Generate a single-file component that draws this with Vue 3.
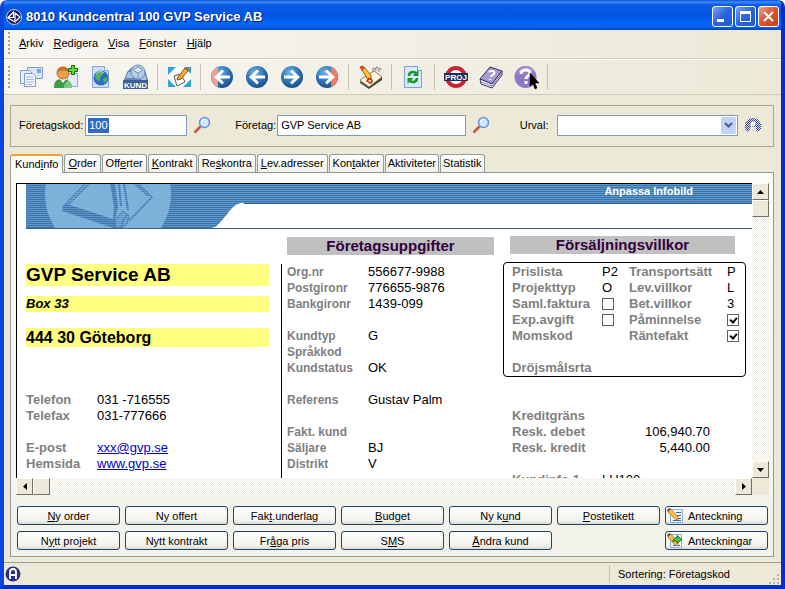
<template>
  <div class="window">
    <header class="titlebar">
      <svg class="titlebar__logo" width="16" height="16" viewBox="0 0 16 16" aria-hidden="true">
        <circle cx="8" cy="8" r="7.5" fill="#1b1f6b" stroke="#dfe6ff" stroke-width="0.8" />
        <path d="M2 8.500 7.500 3v5.500zM9 4l5 4-4 4M2 9l7 4V3.500" fill="none" stroke="#fff" stroke-width="1.2" />
      </svg>
      <h1 class="titlebar__title">8010 Kundcentral 100 GVP Service AB</h1>
      <div class="titlebar__buttons">
        <button type="button" class="caption-btn" aria-label="Minimera">
          <svg width="19" height="19" viewBox="0 0 19 19"><path d="M4 12h7v3H4z" fill="#fff" /></svg>
        </button>
        <button type="button" class="caption-btn" aria-label="Maximera">
          <svg width="19" height="19" viewBox="0 0 19 19">
            <path d="M4 4h11v11H4zM5 7v7h9V7z" fill="#fff" fill-rule="evenodd" />
          </svg>
        </button>
        <button type="button" class="caption-btn caption-btn--close" aria-label="Stäng">
          <svg width="19" height="19" viewBox="0 0 19 19">
            <path d="m5 5 9 9m0-9-9 9" stroke="#fff" stroke-width="2.2" />
          </svg>
        </button>
      </div>
    </header>

    <nav class="menubar">
      <span class="grip"></span>
      <button v-for="item in menus" :key="item" type="button" class="menubar__item">
        <span>{{ parts(item)[0] }}</span><u>{{ parts(item)[1] }}</u><span>{{ parts(item)[2] }}</span>
      </button>
    </nav>

    <div class="toolbar">
      <span class="grip"></span>
      <button type="button" class="tool" aria-label="Kopiera">
        <svg width="26" height="26" viewBox="0 0 26 26">
          <path d="M9.500 3.500h15v11h-15z" fill="#dce8f8" stroke="#7d9cc9" />
          <path d="M19 5h4v4h-4z" fill="#7fa3d8" />
          <path d="M2.500 6.500h9l3 3v10h-12z" fill="#e6effb" stroke="#7d9cc9" />
          <path d="M6.500 9.500h8l3 3v10h-11z" fill="#f2f7ff" stroke="#7d9cc9" />
          <path d="M8 13h7M8 15.500h8M8 18h8M8 20.500h6" stroke="#9db8df" />
        </svg>
      </button>
      <button type="button" class="tool" aria-label="Ny kund">
        <svg width="26" height="26" viewBox="0 0 26 26">
          <path d="M14.500 9.500h10v13h-10z" fill="#e3edfa" stroke="#93abd0" />
          <path d="M1 24c0-6 2-9 8-9s10 3 10 9z" fill="#3d9a45" />
          <path d="M11 24c0-4 2-7 5-7 2 2 3 4 3 7z" fill="#7cc987" />
          <path d="M7 15l3 4 3-4z" fill="#fff" />
          <circle cx="10" cy="9" r="6" fill="#e9a052" stroke="#b8651d" />
          <path d="M4 8c0-7 12-7 12 0-4-2-8-2-12 0z" fill="#c8732a" />
          <path d="M18.500 1.500h3v3h3v3h-3v3h-3v-3h-3v-3h3z" fill="#65dc27" stroke="#0c6b12" />
        </svg>
      </button>
      <button type="button" class="tool" aria-label="Webb">
        <svg width="26" height="26" viewBox="0 0 26 26">
          <path d="M4.500 2.500h12l4 4v17h-16z" fill="#cfdff6" stroke="#8aa7d4" />
          <path d="M16.500 2.500v4h4" fill="#fff" stroke="#8aa7d4" />
          <circle cx="13" cy="14" r="7.500" fill="#3268c8" />
          <path d="M7 12c2-5 6-5 8-4 1 2-1 3-2 4s0 4-2 5c-2-1-4-2-4-5zM15 15l4-2c1 3-1 5-3 6z" fill="#4fb75b" />
          <path d="M8 10c2-3 6-3 8-1" stroke="#b7d8ff" fill="none" />
        </svg>
      </button>
      <button type="button" class="tool" aria-label="Kund">
        <svg width="28" height="26" viewBox="0 0 28 26">
          <path d="M2 16 5 8l5-5h9l4 3 3 10z" fill="#6384b5" />
          <path d="M6 8h5v6H4zM20 10l4 2v4h-5z" fill="#a9c0df" />
          <circle cx="16" cy="8" r="7" fill="#b4cde6" stroke="#6f91bd" />
          <path d="m11 6 5-3 5 3-5 3zM16 9v6" fill="#ddeafa" stroke="#7898c2" />
          <path d="M1 16h25v9H1z" fill="#3d5f94" />
          <text x="13.500" y="24" text-anchor="middle" class="tool__caption">KUND</text>
        </svg>
      </button>
      <span class="divider"></span>
      <button type="button" class="tool" aria-label="Anteckna">
        <svg width="26" height="26" viewBox="0 0 26 26">
          <path d="M2 3h23v20H2z" fill="#fff" />
          <path d="M2 3h8L2 11zM25 3v7l-7-7zM2 23v-8l8 8zM25 23v-8l-8 8z" fill="#31a4cf" />
          <path d="m8 12 7-2 4 8-8 4z" fill="#fff" stroke="#555" />
          <path d="M12 13 19 4l3 3-7 8-4 1z" fill="#f5ad35" stroke="#8b4c12" />
          <path d="m19 4 1-1 3 3-1 1z" fill="#dc4b36" />
        </svg>
      </button>
      <span class="divider"></span>
      <button v-for="nav in navButtons" :key="nav.label" type="button" class="tool" :aria-label="nav.label">
        <svg width="24" height="24" viewBox="0 0 24 24">
          <defs>
            <radialGradient :id="nav.id" cx="40%" cy="30%" r="75%">
              <stop offset="0" stop-color="#78b5e4" />
              <stop offset="0.55" stop-color="#2e73b5" />
              <stop offset="1" stop-color="#164a86" />
            </radialGradient>
          </defs>
          <circle cx="12" cy="12" r="11" :fill="`url(#${nav.id})`" />
          <path v-if="nav.edge === 'left'" d="M8 1.800a11 11 0 0 0 0 20.400z" fill="#ee9f90" />
          <path v-if="nav.edge === 'right'" d="M16 1.800a11 11 0 0 1 0 20.400z" fill="#ee7b62" />
          <path v-if="nav.back" d="M4 12l8-7.500 2 2-4 4h10v3H10l4 4-2 2z" fill="#fff" />
          <path v-else d="M20 12l-8-7.500-2 2 4 4H4v3h10l-4 4 2 2z" fill="#fff" />
        </svg>
      </button>
      <span class="divider"></span>
      <button type="button" class="tool" aria-label="Redigera">
        <svg width="26" height="26" viewBox="0 0 26 26">
          <path d="m3 16 14-9 8 6-13 10z" fill="#fffbe8" stroke="#8a8468" />
          <path d="m3 17 9 6 13-10v3L12 25 3 19z" fill="#4d4633" />
          <path d="M16 8c-1-5 2-5 2-2M19 7c-1-5 2-5 2-2M22 8c-1-5 2-5 2-2" fill="none" stroke="#777" />
          <path d="m3 3 3-1 8 9v4l-4-1z" fill="#ffc832" stroke="#9c5c10" />
          <path d="m3 3 3-1 2 2-3 3z" fill="#d84c25" />
          <path d="M10 18c0-4 5-4 5-1s-4 2-3 0" fill="none" stroke="#d82912" stroke-width="1.600" />
        </svg>
      </button>
      <span class="divider"></span>
      <button type="button" class="tool" aria-label="Uppdatera">
        <svg width="24" height="26" viewBox="0 0 24 26">
          <path d="M3.500 2.500h13l4 4v17h-17z" fill="#dbe9fc" stroke="#7e9fd0" />
          <path d="M16.500 2.500v4h4" fill="#fff" stroke="#7e9fd0" />
          <path d="M8 12c0-4 4-5 7-3M16 14c0 4-4 5-7 3" fill="none" stroke="#169c23" stroke-width="2.600" />
          <path d="M17.500 6v6h-6zM6.500 20v-6h6z" fill="#169c23" />
        </svg>
      </button>
      <span class="divider"></span>
      <button type="button" class="tool" aria-label="Projekt">
        <svg width="26" height="26" viewBox="0 0 26 26">
          <circle cx="13" cy="13" r="9" fill="#fff" stroke="#c92336" stroke-width="4" />
          <path d="M1 9h24v8H1z" fill="#17315c" />
          <text x="13" y="16" text-anchor="middle" class="tool__caption">PROJ</text>
        </svg>
      </button>
      <button type="button" class="tool" aria-label="Handbok">
        <svg width="26" height="26" viewBox="0 0 26 26">
          <path d="M2 15 12 3l12 4-10 13z" fill="#a69bd0" stroke="#37305e" />
          <path d="m2 15 12 5 10-13v4L14 24 3 20z" fill="#fff" stroke="#37305e" />
          <path d="M3 18l11 4L24 9" fill="none" stroke="#8073b8" />
          <path d="M11 8c2-2 7-1 5 2-1 1-3 1-3 3m-1 2v1" fill="none" stroke="#fff" stroke-width="2" />
        </svg>
      </button>
      <button type="button" class="tool" aria-label="Hjälp">
        <svg width="26" height="26" viewBox="0 0 26 26">
          <circle cx="12.500" cy="13" r="11" fill="#8f78c8" />
          <path d="M4 9c3-7 14-8 17-1-5-2-12-2-17 1z" fill="#b6a5e2" />
          <path d="M8 10c0-5 9-5 9-1 0 3-4 3-4 6m0 2v3" fill="none" stroke="#fff" stroke-width="3" />
          <path d="M17 9v13l3-2 2 5 2-1-2-5h4z" fill="#000" stroke="#000" stroke-width="0.500" />
        </svg>
      </button>
      <span class="divider"></span>
    </div>

    <main class="body">
      <form class="search" @submit.prevent>
        <label for="code">Företagskod:</label>
        <span class="search__code">
          <input id="code" v-model="code" class="field field--code" type="text" />
          <span class="search__selection" aria-hidden="true">{{ code }}</span>
        </span>
        <button type="button" class="lookup" aria-label="Sök företagskod">
          <svg width="18" height="18" viewBox="0 0 18 18">
            <path d="m1.500 16.500 6-6" stroke="#c85a48" stroke-width="2.600" />
            <circle cx="11.500" cy="6.500" r="5" fill="#c8ecff" stroke="#6b8fdd" stroke-width="1.500" />
            <path d="M8.500 6c0-2 2-3 4-2.500" fill="none" stroke="#fff" />
          </svg>
        </button>
        <label class="search__label" for="company">Företag:</label>
        <input id="company" v-model="company" class="field field--company" type="text" />
        <button type="button" class="lookup" aria-label="Sök företag">
          <svg width="18" height="18" viewBox="0 0 18 18">
            <path d="m1.500 16.500 6-6" stroke="#c85a48" stroke-width="2.600" />
            <circle cx="11.500" cy="6.500" r="5" fill="#c8ecff" stroke="#6b8fdd" stroke-width="1.500" />
            <path d="M8.500 6c0-2 2-3 4-2.500" fill="none" stroke="#fff" />
          </svg>
        </button>
        <label class="search__label search__label--wide" for="selection">Urval:</label>
        <span class="combo">
          <select id="selection" class="field combo__select">
            <option></option>
          </select>
          <svg class="combo__arrow" width="15" height="17" viewBox="0 0 15 17" aria-hidden="true">
            <rect width="15" height="17" rx="2" fill="#c1d2fa" />
            <path d="m4 6 3.500 3.500L11 6" fill="none" stroke="#4d6185" stroke-width="2.200" />
          </svg>
        </span>
        <button type="button" class="lookup" aria-label="Urval">
          <svg width="18" height="18" viewBox="0 0 18 18">
            <defs>
              <pattern id="dither" width="2" height="2" patternUnits="userSpaceOnUse">
                <path d="M0 0h1v1H0zM1 1h1v1H1z" fill="#303c8c" />
              </pattern>
            </defs>
            <path d="M1 13C0 6 4 2 9 2s9 4 8 11l-3 3-2-2v-3H6v3l-2 2z" fill="#e6e8f6" />
            <path d="M1 13C0 6 4 2 9 2s9 4 8 11l-3 3-2-2v-3H6v3l-2 2z" fill="url(#dither)" />
            <circle cx="9" cy="8" r="2.500" fill="#fff" />
          </svg>
        </button>
      </form>

      <div class="tabs" role="tablist">
        <button
          v-for="tab in tabs"
          :key="tab.label"
          type="button"
          role="tab"
          class="tab"
          :class="{ 'tab--active': tab.label === activeTab, 'tab--tight': tab.tight }"
          :aria-selected="tab.label === activeTab"
          @click="activeTab = tab.label"
        >
          <span>{{ parts(tab.label)[0] }}</span><u>{{ parts(tab.label)[1] }}</u><span>{{ parts(tab.label)[2] }}</span>
        </button>
      </div>

      <section class="panel">
        <div class="viewer">
          <div class="sheet">
            <div class="banner">
              <svg class="banner__art" width="218" height="45" viewBox="0 0 218 45" aria-hidden="true">
                <defs>
                  <pattern id="weave" width="4" height="2" patternUnits="userSpaceOnUse">
                    <path d="M0 0h4v1H0z" fill="#86b4da" fill-opacity="0.55" />
                  </pattern>
                  <clipPath id="disc"><circle cx="82" cy="10" r="63" /></clipPath>
                </defs>
                <path d="M0 0h218v19c-10 0-14 8-19 14-5 5-8 12-15 11H0z" fill="#3774ad" />
                <g clip-path="url(#disc)">
                  <path d="M0 0h160v44H0z" fill="#79b0d8" />
                  <path d="M59 0 37 23M63 0 42 21" fill="none" stroke="#3a74ad" stroke-width="1.500" />
                  <path d="M37 22l4-2 49 16 1 8h-4L36 27z" fill="#3a74ad" />
                  <path d="M84 0h5l3 22-3 14h-2l1-14zM92 0h2l2 22h-2zM97 0h2l4 26h-2z" fill="#3a74ad" />
                  <path d="M89 36l8-9 6 5-2 8-6 4h-5z" fill="#5f9ac9" stroke="#346ca5" />
                  <path d="M95 44l2-8 5-6M112 0l14 13-23 24M109 0l13 12" fill="none" stroke="#3a74ad" stroke-width="1.600" />
                </g>
                <path d="M0 0h218v19c-10 0-14 8-19 14-5 5-8 12-15 11H0z" fill="url(#weave)" />
                <path d="M218 19c-10 0-14 8-19 14-5 5-8 12-15 11h34" fill="#fff" />
                <path d="M0 44.500h218" stroke="#3e648b" />
              </svg>
              <div class="banner__rest">
                <div class="banner__stripe">Anpassa Infobild</div>
              </div>
            </div>

            <div class="columns">
              <div class="address">
                <div class="address__name">GVP Service AB</div>
                <div class="address__street">Box 33</div>
                <div class="address__city">444 30 Göteborg</div>
                <dl class="rows rows--contact">
                  <template v-for="(row, i) in contact" :key="i">
                    <dt>{{ row[0] }}</dt>
                    <dd>
                      <a v-if="row[2]" :href="row[2]">{{ row[1] }}</a>
                      <span v-else>{{ row[1] }}</span>
                    </dd>
                  </template>
                </dl>
              </div>

              <div class="details">
                <h2 class="heading">Företagsuppgifter</h2>
                <dl class="rows rows--details">
                  <template v-for="(row, i) in details" :key="i">
                    <dt>{{ row[0] }}</dt>
                    <dd>{{ row[1] }}</dd>
                  </template>
                </dl>
              </div>

              <div class="terms">
                <h2 class="heading heading--terms">Försäljningsvillkor</h2>
                <div class="terms__box">
                  <span>Prislista</span><b>P2</b><span>Transportsätt</span><b>P</b>
                  <span>Projekttyp</span><b>O</b><span>Lev.villkor</span><b>L</b>
                  <label for="saml">Saml.faktura</label><input id="saml" type="checkbox" class="check" />
                  <span>Bet.villkor</span><b>3</b>
                  <label for="exp">Exp.avgift</label><input id="exp" type="checkbox" class="check" />
                  <label for="pam">Påminnelse</label><input id="pam" type="checkbox" class="check" checked />
                  <span>Momskod</span><b></b>
                  <label for="rante">Räntefakt</label><input id="rante" type="checkbox" class="check" checked />
                  <span class="terms__last">Dröjsmålsrta</span>
                </div>
                <dl class="rows rows--credit">
                  <dt>Kreditgräns</dt><dd></dd>
                  <dt>Resk. debet</dt><dd class="amount">106,940.70</dd>
                  <dt>Resk. kredit</dt><dd class="amount">5,440.00</dd>
                  <dt></dt><dd></dd>
                  <dt>Kundinfo 1</dt><dd>LH100</dd>
                </dl>
              </div>
            </div>
          </div>

          <div class="scroll scroll--vertical">
            <button type="button" class="scroll__btn" aria-label="Upp">
              <svg width="7" height="4" viewBox="0 0 7 4"><path d="M0 4 3.500 0 7 4z" /></svg>
            </button>
            <span class="scroll__thumb"></span>
            <span class="scroll__track"></span>
            <button type="button" class="scroll__btn" aria-label="Ned">
              <svg width="7" height="4" viewBox="0 0 7 4"><path d="M0 0 3.500 4 7 0z" /></svg>
            </button>
          </div>
          <div class="scroll scroll--horizontal">
            <button type="button" class="scroll__btn" aria-label="Vänster">
              <svg width="4" height="7" viewBox="0 0 4 7"><path d="M4 0 0 3.500 4 7z" /></svg>
            </button>
            <span class="scroll__thumb"></span>
            <span class="scroll__track"></span>
            <button type="button" class="scroll__btn" aria-label="Höger">
              <svg width="4" height="7" viewBox="0 0 4 7"><path d="M0 0l4 3.500L0 7z" /></svg>
            </button>
          </div>
          <span class="viewer__corner"></span>
        </div>

        <div class="actions">
          <button v-for="action in actions" :key="action" type="button" class="action">
            <span>{{ parts(action)[0] }}</span><u>{{ parts(action)[1] }}</u><span>{{ parts(action)[2] }}</span>
          </button>
          <button type="button" class="action action--note">
            <svg width="16" height="16" viewBox="0 0 16 16" aria-hidden="true">
              <path d="M3.500 1.500h12v13h-12z" fill="#eef5ff" stroke="#8fadde" />
              <path d="M9 4.500h5M10 7.500h4M11 10.500h3M6 12.500h8" stroke="#3d62a8" />
              <path d="m2 2 2-1 7 8v3l-3-1-7-7z" fill="#ffbd3c" stroke="#b8741c" stroke-width="0.800" />
              <path d="M0 2 2 0l2 1-3 3z" fill="#555" />
            </svg>
            <span>Anteckning</span>
          </button>
          <button type="button" class="action action--note action--notes">
            <svg width="16" height="16" viewBox="0 0 16 16" aria-hidden="true">
              <path d="M3.500 1.500h11v13h-11z" fill="#eef5ff" stroke="#8fadde" />
              <path d="M6 12.500h7" stroke="#3d62a8" />
              <path d="m2 2 2-1 7 9v3l-3-1-7-8z" fill="#ffbd3c" stroke="#b8741c" stroke-width="0.800" />
              <path d="M0 2 2 0l2 1-3 3z" fill="#555" />
              <path d="M6 9c0-4 2-4 4-4V2.500l5 4-5 4V8C8 8 7 8 6 9z" fill="#4cc940" stroke="#146f17" />
            </svg>
            <span>Anteckningar</span>
          </button>
        </div>
      </section>
    </main>

    <footer class="statusbar">
      <svg width="16" height="16" viewBox="0 0 16 16" aria-hidden="true">
        <circle cx="8" cy="8" r="7.500" fill="#2d2f83" />
        <path d="M5 13V6c0-4 6-4 6 0v7M5 9h6" fill="none" stroke="#fff" stroke-width="1.800" />
      </svg>
      <span class="statusbar__sort">Sortering: Företagskod</span>
      <svg class="statusbar__grip" width="12" height="12" viewBox="0 0 12 12" aria-hidden="true">
        <path d="M9 1h2v2H9zM5 5h2v2H5zM9 5h2v2H9zM1 9h2v2H1zM5 9h2v2H5zM9 9h2v2H9z" fill="#b8b4a1" />
      </svg>
    </footer>
  </div>
</template>

<script setup>
import { ref } from 'vue'

const code = ref('100')
const company = ref('GVP Service AB')

// "&" marks the shortcut letter
const menus = ['&Arkiv', '&Redigera', '&Visa', '&Fönster', '&Hjälp']

const tabs = [
  { label: 'Kund&info' },
  { label: '&Order' },
  { label: 'Off&erter' },
  { label: '&Kontrakt' },
  { label: 'Re&skontra' },
  { label: '&Lev.adresser' },
  { label: 'Kon&takter' },
  { label: 'Aktiviteter', tight: true },
  { label: 'Statistik', tight: true }
]
const activeTab = ref('Kund&info')

const navButtons = [
  { id: 'nav-first', label: 'Första', back: true, edge: 'left' },
  { id: 'nav-prev', label: 'Föregående', back: true },
  { id: 'nav-next', label: 'Nästa', back: false },
  { id: 'nav-last', label: 'Sista', back: false, edge: 'right' }
]

const contact = [
  ['Telefon', '031 -716555'],
  ['Telefax', '031-777666'],
  ['', ''],
  ['E-post', 'xxx@gvp.se', 'mailto:xxx@gvp.se'],
  ['Hemsida', 'www.gvp.se', 'http://www.gvp.se']
]

const details = [
  ['Org.nr', '556677-9988'],
  ['Postgironr', '776655-9876'],
  ['Bankgironr', '1439-099'],
  ['', ''],
  ['Kundtyp', 'G'],
  ['Språkkod', ''],
  ['Kundstatus', 'OK'],
  ['', ''],
  ['Referens', 'Gustav Palm'],
  ['', ''],
  ['Fakt. kund', ''],
  ['Säljare', 'BJ'],
  ['Distrikt', 'V'],
  ['', '']
]

const actions = [
  '&Ny order',
  'Ny offert',
  'Fak&t.underlag',
  '&Budget',
  'Ny k&und',
  '&Postetikett',
  'N&ytt projekt',
  'Nytt kontrakt',
  'Fr&åga pris',
  'S&MS',
  '&Ändra kund'
]

function parts(label) {
  const at = label.indexOf('&')
  if (at < 0) return [label, '', '']
  return [label.slice(0, at), label[at + 1], label.slice(at + 2)]
}
</script>

<style>
body {
  background: #fff;
}
</style>

<style scoped>
.window {
  box-sizing: border-box;
  display: flex;
  flex-direction: column;
  height: 100vh;
  border: 4px solid #0b46dc;
  border-top: 0;
  border-color: #0b46dc #0a2fc0 #0a2fc0 #0b46dc;
  border-radius: 7px 7px 0 0;
  background: #ece9d8;
  font-family: 'Liberation Sans', Arial, sans-serif;
  font-size: 11px;
  color: #000;
  overflow: hidden;
}

button,
input,
select {
  font: inherit;
  color: inherit;
}

button {
  padding: 0;
  border: 0;
  background: none;
}

/* title bar */
.titlebar {
  display: flex;
  align-items: center;
  flex: none;
  height: 30px;
  margin: 0 -4px;
  padding: 3px 6px 0;
  box-sizing: border-box;
  background: linear-gradient(#0a4fd8 0, #3c8cf8 2px, #0a5ae6 5px, #0354e0 14px, #0466fb 24px, #0563f5 27px, #0340c0 30px);
}

.titlebar__title {
  flex: 1;
  margin: 0 0 0 4px;
  font-size: 13px;
  line-height: 16px;
  color: #fff;
  text-shadow: 1px 1px 1px #0a1883;
}

.titlebar__buttons {
  display: flex;
  gap: 2px;
}

.caption-btn {
  box-sizing: border-box;
  width: 21px;
  height: 21px;
  border: 1px solid #fff;
  border-radius: 3px;
  background: linear-gradient(135deg, #7aa2f5, #2b62e0 50%, #2458d4);
}

.caption-btn svg {
  display: block;
}

.caption-btn--close {
  background: linear-gradient(135deg, #f0a088, #e0512c 50%, #c83c14);
}

/* menu and toolbar */
.menubar,
.toolbar {
  display: flex;
  align-items: center;
  flex: none;
  box-sizing: border-box;
  background: linear-gradient(90deg, #f7f6f1, #ece9d8);
  border-bottom: 1px solid #d0ccb8;
}

.menubar {
  height: 29px;
  padding: 0 4px 2px;
}

.menubar__item {
  margin-left: 4px;
  padding: 0 3px;
  line-height: 16px;
}

.toolbar {
  height: 36px;
  padding: 0 4px;
  border-top: 1px solid #fff;
}

.grip {
  width: 2px;
  height: 22px;
  margin-right: 2px;
  background: repeating-linear-gradient(#a8a593 0 2px, transparent 2px 4px);
}

.tool {
  display: flex;
  align-items: center;
  justify-content: center;
  flex: none;
  width: 35px;
  height: 30px;
}

.toolbar .grip {
  margin-right: 3px;
}

.tool__caption {
  font-size: 8px;
  font-weight: bold;
  fill: #fff;
}

.divider {
  flex: none;
  width: 1px;
  height: 26px;
  margin: 0 3px 0 4px;
  background: #c5c2b0;
}

/* search row */
.body {
  display: flex;
  flex-direction: column;
  flex: 1;
  min-height: 0;
  padding: 10px 7px 5px 6px;
}

.search {
  display: flex;
  align-items: center;
  flex: none;
  box-sizing: border-box;
  height: 42px;
  padding: 0 11px 2px 8px;
  border: 1px solid #a8a794;
}

.search__label {
  margin-left: 24px;
}

.search__label--wide {
  margin-left: 30px;
}

.search__label + .combo {
  margin-left: 9px;
}

.field {
  box-sizing: border-box;
  height: 21px;
  padding: 0 3px;
  border: 1px solid #7f9db9;
  border-radius: 0;
  background: #fff;
  outline: none;
}

.search__code {
  position: relative;
  margin-left: 2px;
}

.field--code {
  display: block;
  width: 102px;
}

.search__selection {
  position: absolute;
  top: 3px;
  left: 3px;
  padding: 0 1px;
  line-height: 15px;
  color: #fff;
  background: #316ac5;
}

.field--company {
  flex: 1;
  width: 0;
  margin-left: 1px;
}

.lookup {
  display: flex;
  margin-left: 6px;
}

.combo {
  position: relative;
  flex: 1;
}

.combo__select {
  display: block;
  width: 100%;
  appearance: none;
}

.combo__arrow {
  position: absolute;
  top: 2px;
  right: 2px;
  pointer-events: none;
}

/* tabs */
.tabs {
  display: flex;
  align-items: flex-end;
  flex: none;
  gap: 1px;
  height: 25px;
}

.tab {
  box-sizing: border-box;
  height: 18px;
  padding: 0 3px;
  border: 1px solid #919b9c;
  border-bottom: 0;
  border-radius: 3px 3px 0 0;
  background: linear-gradient(#fff, #f0efe8);
  line-height: 17px;
  white-space: nowrap;
}

.tab--tight {
  padding: 0 2px;
}

.tab--active {
  position: relative;
  height: 19px;
  margin-bottom: -1px;
  padding: 0 4px;
  border-top: 2px solid #f3a22e;
  background: #fcfcfa;
}

.panel {
  display: flex;
  flex-direction: column;
  flex: 1;
  min-height: 0;
  padding: 10px 4px 6px 5px;
  border: 1px solid #919b9c;
  background: linear-gradient(#fbfbf8, #f3f2e9);
}

/* scrolling sheet */
.viewer {
  display: grid;
  grid-template-columns: minmax(0, 1fr) 17px;
  grid-template-rows: minmax(0, 1fr) 17px;
  flex: 1;
  min-height: 0;
}

.sheet {
  overflow: hidden;
  padding-left: 9px;
  border-top: 1px solid #000;
  border-left: 1px solid #000;
  background: #fff;
}

.banner {
  display: flex;
  height: 45px;
}

.banner__art {
  flex: none;
}

.banner__rest {
  flex: 1;
  border-bottom: 1px solid #3e648b;
}

.banner__stripe {
  box-sizing: border-box;
  height: 20px;
  padding-right: 59px;
  font-weight: bold;
  line-height: 14px;
  text-align: right;
  color: #fff;
  background: repeating-linear-gradient(#6298c6 0 1px, #3774ad 1px 2px);
  border-bottom: 1px solid #2a5585;
}

.columns {
  display: grid;
  grid-template-columns: 255fr 222fr 243fr;
  padding-right: 6px;
}

.address {
  padding: 35px 12px 0 0;
  font-weight: bold;
}

.address__name,
.address__street,
.address__city {
  background: #ffff80;
}

.address__name {
  font-size: 19px;
  line-height: 22px;
}

.address__street {
  margin-top: 10px;
  font-size: 13px;
  font-style: italic;
  line-height: 16px;
}

.address__city {
  margin-top: 16px;
  font-size: 16px;
  line-height: 19px;
}

.rows {
  display: grid;
  grid-auto-rows: 16px;
  margin: 0;
  font-size: 13px;
  font-weight: normal;
  line-height: 16px;
  white-space: nowrap;
}

.rows dt {
  font-weight: bold;
  color: #808080;
}

.rows dd {
  margin: 0;
}

.rows a {
  color: #0000d0;
}

.rows--contact {
  grid-template-columns: 71px 1fr;
  margin-top: 45px;
}

.heading {
  height: 18px;
  margin: 8px 9px 0 6px;
  font-size: 15px;
  line-height: 18px;
  text-align: center;
  color: #330040;
  background: #c0c0c0;
}

.heading--terms {
  margin: 7px 11px 0 7px;
}

.rows--details {
  grid-template-columns: 81px 1fr;
  margin-top: 9px;
  padding-left: 5px;
  border-left: 1px solid #000;
}

.rows--details dt {
  font-size: 12px;
}

.terms__box {
  display: grid;
  grid-template-columns: 90px 27px 98px 1fr;
  grid-auto-rows: 16px;
  align-items: center;
  box-sizing: border-box;
  height: 115px;
  margin-top: 8px;
  padding: 1px 0 0 8px;
  border: 1px solid #000;
  border-radius: 4px;
  font-size: 13px;
  line-height: 16px;
  font-weight: bold;
  color: #808080;
  white-space: nowrap;
}

.terms__box b {
  font-weight: normal;
  color: #000;
}

.terms__last {
  grid-row: 7;
}

.check {
  position: relative;
  box-sizing: border-box;
  width: 12px;
  height: 12px;
  margin: 0;
  border: 1px solid #606060;
  background: #fff;
  appearance: none;
}

.check:checked::after {
  content: '';
  position: absolute;
  top: 1px;
  left: 3px;
  width: 3px;
  height: 5px;
  border: solid #000;
  border-width: 0 2px 2px 0;
  transform: rotate(40deg);
}

.rows--credit {
  grid-template-columns: 90px 108px;
  margin-top: 31px;
  padding-left: 9px;
}

.amount {
  text-align: right;
}

.scroll {
  display: flex;
  background: repeating-conic-gradient(#efede0 0 25%, #fff 0 50%) 0 0 / 2px 2px;
}

.scroll--vertical {
  flex-direction: column;
}

.scroll__btn,
.scroll__thumb {
  display: flex;
  align-items: center;
  justify-content: center;
  flex: none;
  box-sizing: border-box;
  width: 17px;
  height: 17px;
  border: 1px solid;
  border-color: #fff #716f64 #716f64 #fff;
  background: #ece9d8;
}

.scroll__track {
  flex: 1;
}

.viewer__corner {
  background: #ece9d8;
}

/* bottom buttons */
.actions {
  display: grid;
  grid-template-columns: repeat(7, minmax(0, 1fr));
  grid-template-rows: 19px 19px;
  grid-auto-flow: row;
  gap: 6px 5px;
  flex: none;
  margin: 11px 1px 0;
}

.action {
  border: 1px solid #1c4474;
  border-radius: 3px;
  background: linear-gradient(#fff, #f2f1ea 80%, #dedbce);
  white-space: nowrap;
}

.action:nth-child(7) {
  grid-row: 2;
  grid-column: 1;
}

.action--note {
  display: flex;
  align-items: center;
  gap: 5px;
  grid-row: 1;
  grid-column: 7;
  padding-left: 1px;
}

.action--notes {
  grid-row: 2;
}

/* status bar */
.statusbar {
  display: flex;
  align-items: center;
  flex: none;
  box-sizing: border-box;
  height: 23px;
  padding: 0 1px;
  border-top: 1px solid #9d9a8a;
}

.statusbar__sort {
  width: 150px;
  margin-left: auto;
  padding-left: 8px;
  border-left: 1px solid #c5c2b0;
  line-height: 18px;
}

.statusbar__grip {
  align-self: flex-end;
}
</style>
